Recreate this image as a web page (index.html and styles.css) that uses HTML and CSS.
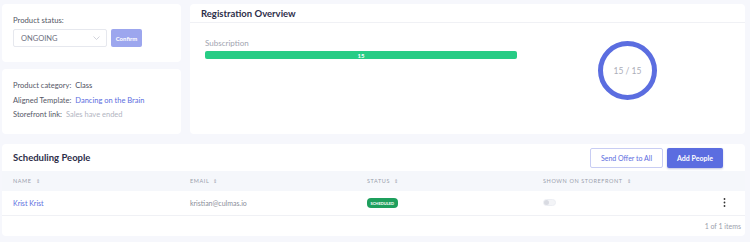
FILE: index.html
```html
<!DOCTYPE html>
<html lang="en">
<head>
    <meta charset="UTF-8">
    <meta name="viewport" content="width=device-width, initial-scale=1.0">
    <title>Product Overview</title>
    <link rel="stylesheet" href="styles.css">
</head>
<body>
    <div class="top">
        <div class="side">
            <div class="card status-card">
                <p class="label">Product status:</p>
                <div class="status-row">
                    <div class="select">
                        <span>ONGOING</span>
                        <svg width="7" height="4" viewBox="0 0 7 4"><path d="M0.5 0.5 L3.5 3.5 L6.5 0.5" fill="none" stroke="#c5c8d2" stroke-width="0.8"/></svg>
                    </div>
                    <button class="confirm-btn">Confirm</button>
                </div>
            </div>
            <div class="card info-card">
                <p><span class="key">Product category:</span> Class</p>
                <p><span class="key">Aligned Template:</span> <a class="link">Dancing on the Brain</a></p>
                <p><span class="key">Storefront link:</span> <span class="muted">Sales have ended</span></p>
            </div>
        </div>
        <div class="card overview">
            <h2 class="overview-title">Registration Overview</h2>
            <div class="overview-body">
                <div class="sub">
                    <p class="sub-label">Subscription</p>
                    <div class="bar"><span>15</span></div>
                </div>
                <div class="donut">
                    <span>15 / 15</span>
                </div>
            </div>
        </div>
    </div>

    <div class="card people">
        <div class="people-head">
            <h2>Scheduling People</h2>
            <div class="actions">
                <button class="btn-outline">Send Offer to All</button>
                <button class="btn-primary">Add People</button>
            </div>
        </div>
        <div class="table">
            <div class="thead">
                <div>NAME <i class="sort">&#8661;</i></div>
                <div>EMAIL <i class="sort">&#8661;</i></div>
                <div>STATUS <i class="sort">&#8661;</i></div>
                <div>SHOWN ON STOREFRONT <i class="sort">&#8661;</i></div>
                <div></div>
            </div>
            <div class="trow">
                <div><a class="link">Krist Krist</a></div>
                <div class="email">kristian@culmas.io</div>
                <div><span class="badge">SCHEDULED</span></div>
                <div><span class="toggle"></span></div>
                <div class="kebab">
                    <svg width="3" height="9" viewBox="0 0 3 9"><circle cx="1.5" cy="1" r="0.9" fill="#333"/><circle cx="1.5" cy="4.5" r="0.9" fill="#333"/><circle cx="1.5" cy="8" r="0.9" fill="#333"/></svg>
                </div>
            </div>
        </div>
        <div class="footer">1 of 1 items</div>
    </div>
</body>
</html>
```

FILE: styles.css
```css
* {
    margin: 0;
    padding: 0;
    box-sizing: border-box;
}

body {
    font-family: Lato, 'Open Sans', sans-serif;
    background: #f6f7fc;
    padding: 4px 5px 0 2px;
    color: #4b4c5c;
    font-size: 8px;
}

.card {
    background: #fff;
    border-radius: 4px;
}

.top {
    display: grid;
    grid-template-columns: 179px 1fr;
    gap: 9px;
    height: 130px;
}

.side {
    display: flex;
    flex-direction: column;
    gap: 7px;
}

/* Product status */
.status-card {
    height: 58px;
    padding: 11px 11px;
}

.label {
    color: #555766;
    font-size: 7.7px;
    margin-bottom: 4px;
}

.status-row {
    display: flex;
    gap: 4px;
}

.select {
    width: 94px;
    height: 18px;
    border: 1px solid #e6e8ee;
    border-radius: 2px;
    display: flex;
    align-items: center;
    justify-content: space-between;
    padding: 0 6px 0 7px;
    color: #6e7080;
    font-size: 7.5px;
}

.confirm-btn {
    width: 31px;
    height: 18px;
    border: none;
    border-radius: 2px;
    background: #9ca6ee;
    color: #fff;
    font-family: inherit;
    font-weight: 700;
    font-size: 6px;
}

/* Product info */
.info-card {
    flex: 1;
    padding: 12px 11px;
    display: flex;
    flex-direction: column;
    gap: 4px;
    font-size: 7.5px;
}

.info-card p {
    line-height: 10.5px;
    color: #4b4c5c;
}

.key {
    color: #555766;
    margin-right: 2px;
}

.link {
    color: #5b6de0;
}

.muted {
    color: #b2b5c1;
}

/* Registration overview */
.overview {
    display: flex;
    flex-direction: column;
}

.overview-title {
    font-size: 9.5px;
    font-weight: 700;
    color: #2d2e4a;
    padding: 4px 11px 0;
    height: 19px;
    border-bottom: 1px solid #f0f1f5;
}

.overview-body {
    flex: 1;
    display: flex;
    align-items: flex-start;
    padding: 0 0 0 15px;
}

.sub {
    width: 312px;
    padding-top: 15px;
}

.sub-label {
    color: #a1a4b0;
    font-size: 8px;
    margin-bottom: 3px;
}

.bar {
    height: 8px;
    background: #27cc85;
    border-radius: 2px;
    display: flex;
    align-items: center;
    justify-content: center;
    color: #fff;
    font-size: 6px;
    font-weight: 700;
}

.donut {
    width: 59px;
    height: 59px;
    border: 5px solid #5b6de0;
    border-radius: 50%;
    margin: 18px 0 0 81px;
    display: flex;
    align-items: center;
    justify-content: center;
    color: #abaeb8;
    font-size: 8.5px;
}

/* Scheduling people */
.people {
    margin-top: 10px;
    height: 92px;
    display: flex;
    flex-direction: column;
}

.people-head {
    height: 27px;
    display: flex;
    align-items: center;
    justify-content: space-between;
    padding: 0 22px 0 11px;
}

.people-head h2 {
    font-size: 9.5px;
    font-weight: 700;
    color: #2d2e4a;
}

.actions {
    display: flex;
    gap: 4px;
    margin-top: 1px;
}

.btn-outline,
.btn-primary {
    height: 20px;
    border-radius: 2px;
    font-family: inherit;
    font-size: 7px;
}

.btn-outline {
    width: 73px;
    background: #fff;
    border: 1px solid #c8cdf3;
    color: #5b6de0;
}

.btn-primary {
    width: 56px;
    background: #5b6de0;
    border: none;
    color: #fff;
    font-weight: 700;
    box-shadow: 0 1px 2px rgba(60, 70, 160, 0.3);
}

.thead,
.trow {
    display: grid;
    grid-template-columns: 177px 177px 176px 176px 1fr;
    align-items: center;
    padding-left: 11px;
}

.thead {
    height: 20px;
    background: #f5f7fb;
    color: #9a9eab;
    font-size: 5.5px;
    letter-spacing: 0.6px;
}

.sort {
    font-style: normal;
    font-size: 5px;
    margin-left: 2px;
}

.trow {
    height: 25px;
    border-bottom: 1px solid #f0f1f5;
    font-size: 7px;
}

.email {
    color: #8a8d99;
}

.badge {
    display: inline-block;
    background: #1e9f5d;
    color: #fff;
    font-size: 4px;
    font-weight: 700;
    padding: 2.5px 3.5px;
    border-radius: 4px;
}

.toggle {
    display: inline-block;
    width: 13px;
    height: 7px;
    border-radius: 4px;
    border: 1px solid #eceef3;
    background: #f3f4f7;
    position: relative;
}

.toggle::after {
    content: "";
    position: absolute;
    left: 0;
    top: 0;
    width: 5px;
    height: 5px;
    border-radius: 50%;
    background: #d9dbe2;
}

.kebab {
    padding-left: 4px;
}

.footer {
    flex: 1;
    display: flex;
    align-items: center;
    justify-content: flex-end;
    padding-right: 4px;
    color: #9a9eab;
    font-size: 7px;
}
```
